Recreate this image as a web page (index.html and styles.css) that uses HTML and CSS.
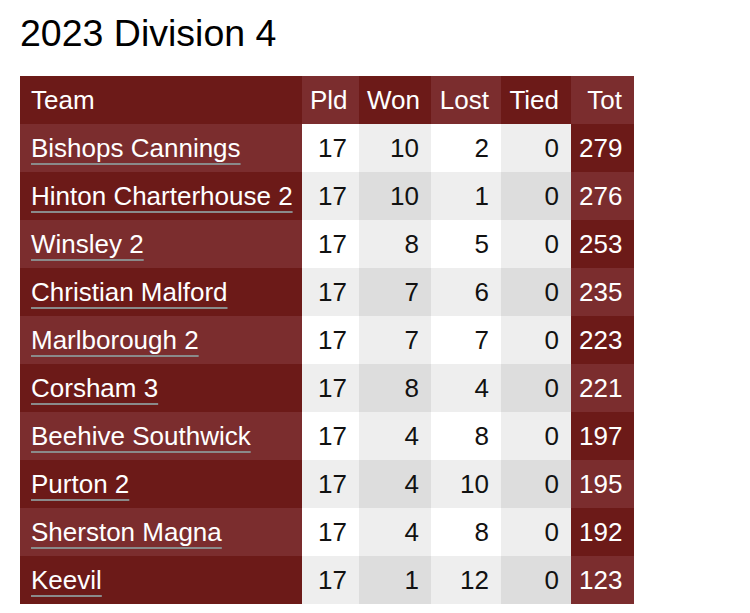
FILE: index.html
```html
<!DOCTYPE html>
<html lang="en">
<head>
<meta charset="utf-8">
<title>2023 Division 4</title>
<link rel="stylesheet" href="styles.css">
</head>
<body>
<h1 class="title">2023 Division 4</h1>
<table class="league">
  <thead>
    <tr><th class="team">Team</th><th>Pld</th><th>Won</th><th>Lost</th><th>Tied</th><th>Tot</th></tr>
  </thead>
  <tbody>
    <tr><td class="team"><a href="#">Bishops Cannings</a></td><td>17</td><td>10</td><td>2</td><td>0</td><td>279</td></tr>
    <tr><td class="team"><a href="#">Hinton Charterhouse 2</a></td><td>17</td><td>10</td><td>1</td><td>0</td><td>276</td></tr>
    <tr><td class="team"><a href="#">Winsley 2</a></td><td>17</td><td>8</td><td>5</td><td>0</td><td>253</td></tr>
    <tr><td class="team"><a href="#">Christian Malford</a></td><td>17</td><td>7</td><td>6</td><td>0</td><td>235</td></tr>
    <tr><td class="team"><a href="#">Marlborough 2</a></td><td>17</td><td>7</td><td>7</td><td>0</td><td>223</td></tr>
    <tr><td class="team"><a href="#">Corsham 3</a></td><td>17</td><td>8</td><td>4</td><td>0</td><td>221</td></tr>
    <tr><td class="team"><a href="#">Beehive Southwick</a></td><td>17</td><td>4</td><td>8</td><td>0</td><td>197</td></tr>
    <tr><td class="team"><a href="#">Purton 2</a></td><td>17</td><td>4</td><td>10</td><td>0</td><td>195</td></tr>
    <tr><td class="team"><a href="#">Sherston Magna</a></td><td>17</td><td>4</td><td>8</td><td>0</td><td>192</td></tr>
    <tr><td class="team"><a href="#">Keevil</a></td><td>17</td><td>1</td><td>12</td><td>0</td><td>123</td></tr>
  </tbody>
</table>
</body>
</html>
```
FILE: styles.css
```css
html, body {
  margin: 0;
  padding: 0;
  background: #ffffff;
}
body {
  padding: 11px 20px 0;
  font-family: "Liberation Sans", Arial, sans-serif;
  color: #111111;
}
.title {
  margin: 0 0 21px;
  font-size: 37.5px;
  line-height: 44px;
  font-weight: normal;
  color: #000000;
}
.league {
  border-collapse: collapse;
  border-spacing: 0;
  font-size: 26px;
  table-layout: fixed;
  width: 614px;
}
.league th,
.league td {
  height: 48px;
  padding: 0 12px 0 8px;
  line-height: 47px;
  text-align: right;
  font-weight: normal;
  white-space: nowrap;
  box-sizing: border-box;
}
.league th.team,
.league td.team {
  text-align: left;
  padding: 0 8px 0 11px;
}
.league thead th:nth-child(1) { width: 282px; }
.league thead th:nth-child(2) { width: 57px; }
.league thead th:nth-child(3) { width: 72px; }
.league thead th:nth-child(4) { width: 70px; }
.league thead th:nth-child(5) { width: 70px; }
.league thead th:nth-child(6) { width: 63px; }

/* header: alternating column shades */
.league thead th { color: #ffffff; background: #6c1a18; }
.league thead th:nth-child(even) { background: #7b2d2e; }

/* odd body rows */
.league tbody tr:nth-child(odd) td { background: #ffffff; }
.league tbody tr:nth-child(odd) td:nth-child(odd) { background: #eeeeee; }
.league tbody tr:nth-child(odd) td.team { background: #7b2d2e; }
.league tbody tr:nth-child(odd) td:last-child { background: #6c1a18; color: #ffffff; }

/* even body rows */
.league tbody tr:nth-child(even) td { background: #eeeeee; }
.league tbody tr:nth-child(even) td:nth-child(odd) { background: #dddddd; }
.league tbody tr:nth-child(even) td.team { background: #6c1a18; }
.league tbody tr:nth-child(even) td:last-child { background: #7b2d2e; color: #ffffff; }

.league a {
  color: #ffffff;
  text-decoration: underline;
  text-decoration-color: #8a8a8a;
  text-decoration-thickness: 2px;
  text-underline-offset: 6px;
}
```
